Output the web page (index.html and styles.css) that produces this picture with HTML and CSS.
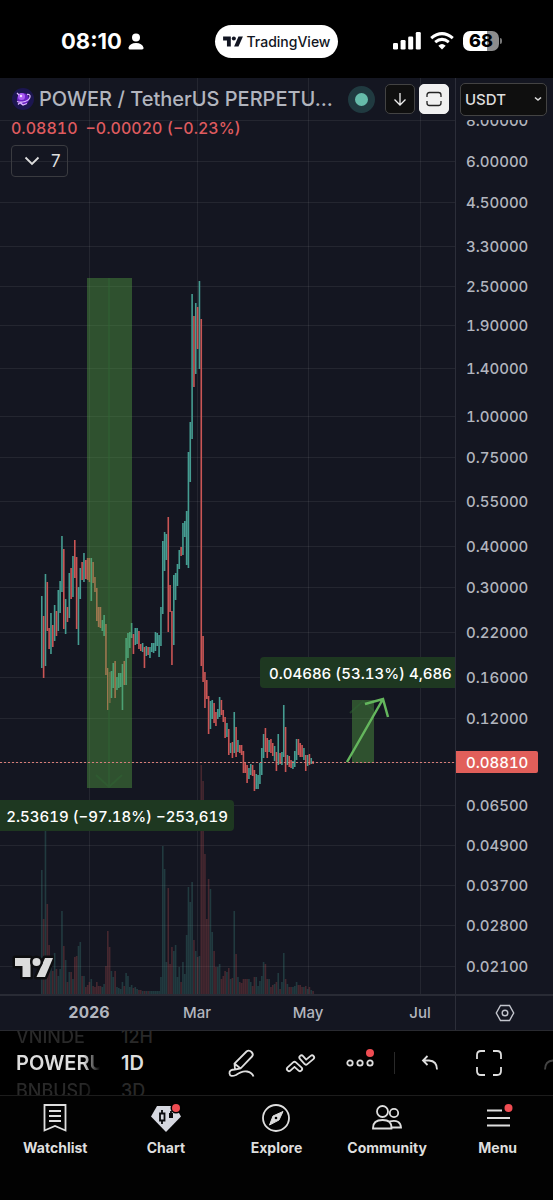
FILE: index.html
```html
<!DOCTYPE html>
<html lang="en">

<head>
    <meta charset="UTF-8">
    <meta name="viewport" content="width=device-width, initial-scale=1">
    <title>POWER / TetherUS</title>
    <link rel="stylesheet" href="styles.css">
</head>

<body>
    <header class="status">
        <div class="clock">
            <span>08:10</span>
            <svg width="16" height="17" viewBox="0 0 16 17" fill="#fff"><circle cx="8" cy="4.5" r="4"/><path d="M.5 16.500V14.500Q2 10 8 10T15.500 14.500Q16 16.500 14 16.500H2Q.5 16.500.5 15z"/></svg>
        </div>
        <div class="island">
            <svg width="20" height="11" viewBox="0 0 36 20" fill="#111522"><path d="M0 1H14V19H7V8H0z"/><circle cx="19.500" cy="4.500" r="3.700"/><path d="M28 1H36L28 19H20z"/></svg>
            <span>TradingView</span>
        </div>
        <div class="signals">
            <svg width="28" height="18" viewBox="0 0 28 18" fill="#fff"><rect y="11" width="5" height="6.500" rx="1.300"/><rect x="7.600" y="8" width="5" height="9.500" rx="1.300"/><rect x="15.200" y="4.500" width="5" height="13" rx="1.300"/><rect x="22.800" y="0" width="5" height="17.500" rx="1.300"/></svg>
            <svg width="24" height="18" viewBox="0 0 24 18" fill="none" stroke="#fff" stroke-width="3"><path d="M1.200 6.200Q12-3 22.800 6.200"/><path d="M5.200 10.200Q12 4.500 18.800 10.200"/><path d="M12 17.500L8.300 13.700Q12 10.500 15.700 13.700z" fill="#fff" stroke="none"/></svg>
            <div class="battery"><b>68</b></div>
        </div>
    </header>

    <main class="chart">
        <section class="pane">
            <svg id="plot" class="layer"></svg>
            <div class="legend">
                <div class="title-row">
                    <svg width="24" height="24" viewBox="0 0 24 24"><circle cx="12" cy="12" r="11" fill="#1c1650"/><circle cx="12" cy="12" r="6" fill="#6a22c4"/><circle cx="10.500" cy="9.500" r="3.500" fill="#a95cf2"/><path d="M6 6L8 8M16 7.500Q19.500 7 19 10T14 14.500T6 14.500M7 17.500L9 15.500L12 18L16 16.500" fill="none" stroke="#dcb8ff" stroke-width="1.300"/><circle cx="10" cy="9" r="1.200" fill="#f0dcff"/></svg>
                    <h1>POWER / TetherUS PERPETU...</h1>
                    <span class="live"></span>
                    <button class="square" aria-label="Down">
                        <svg width="16" height="16" viewBox="0 0 16 16" fill="none" stroke="#eee" stroke-width="1.300"><path d="M8 2V13.500M2.500 8.500L8 14L13.500 8.500"/></svg>
                    </button>
                    <button class="square light" aria-label="Fit">
                        <svg width="16" height="16" viewBox="0 0 16 16" fill="none" stroke="#222" stroke-width="1.300"><path d="M1 6V4Q1 1.500 3.500 1.500H12.500Q15 1.500 15 4V6M1 10V12Q1 14.500 3.500 14.500H12.500Q15 14.500 15 12V10"/></svg>
                    </button>
                </div>
                <div class="quote"><span>0.08810</span><span>−0.00020 (−0.23%)</span></div>
                <button class="studies">
                    <svg width="16" height="10" viewBox="0 0 16 10" fill="none" stroke="#ddd" stroke-width="1.800"><path d="M1.500 1.500L8 8L14.500 1.500"/></svg>
                    7
                </button>
            </div>
            <svg class="logo" width="42" height="26" viewBox="0 0 42 26"><g fill="#dcdcdc" stroke="#0d0d0f" stroke-width="5" stroke-linejoin="round" paint-order="stroke"><path d="M3 4H18.500V23H10.500V12H3z"/><path d="M33 4H41L33 23H24.500z"/><circle cx="24.500" cy="8" r="4"/></g></svg>
        </section>
        <section class="prices">
            <div class="currency">
                <select aria-label="Currency"><option>USDT</option></select>
                <svg width="8" height="6" viewBox="0 0 8 6" fill="none" stroke="#ddd" stroke-width="1.600"><path d="M1 1.500L4 4L7 1.500"/></svg>
            </div>
            <svg id="priceAxis"></svg>
        </section>
        <svg id="timeAxis"></svg>
        <button class="corner" aria-label="Scale settings">
            <svg width="20" height="18" viewBox="0 0 20 18" fill="none" stroke="#c3c5cd" stroke-width="1.400"><path d="M5.500 1.500H14.500L18.700 9L14.500 16.500H5.500L1.300 9z"/><circle cx="10" cy="9" r="2.800"/></svg>
        </button>
    </main>

    <div class="toolbar">
        <div class="picker symbol">
            <span>VNINDE</span>
            <strong>POWERU</strong>
            <span>BNBUSD</span>
        </div>
        <div class="picker">
            <span>12H</span>
            <strong>1D</strong>
            <span>3D</span>
        </div>
        <div class="tools">
            <button aria-label="Draw">
                <svg width="28" height="30" viewBox="0 0 28 30"><path d="M8 21.500L7.500 15.500L19.500 3.500Q22 1.500 24.500 4T25 8.500L13.500 20.500L8 21.500M7.500 15.500L13.500 20.500M8 21.500Q2 21.500 2.500 25.500T9 27Q15 22.500 20 23.500T26.500 28.500"/></svg>
            </button>
            <button aria-label="Indicators">
                <svg width="32" height="22" viewBox="0 0 32 22" stroke-linecap="round" stroke-linejoin="round"><path d="M5 17L10.500 12L16 17M17.500 5.500L22 10.500L28 5.500" stroke-width="6"/><path d="M5 17L10.500 12L16 17M17.500 5.500L22 10.500L28 5.500" stroke="#000" stroke-width="2.400"/></svg>
            </button>
            <button class="dotted" aria-label="More">
                <svg width="28" height="8" viewBox="0 0 28 8"><circle cx="4" cy="4" r="2.700"/><circle cx="14" cy="4" r="2.700"/><circle cx="24" cy="4" r="2.700"/></svg>
            </button>
            <i class="divider"></i>
            <button aria-label="Undo">
                <svg width="18" height="16" viewBox="0 0 18 16"><path d="M6.500 1L2 5.500L6.500 10M2 5.500H8Q16 6 16 14.500"/></svg>
            </button>
            <button class="full" aria-label="Fullscreen">
                <svg width="26" height="26" viewBox="0 0 26 26"><path d="M1 9V5Q1 1 5 1H9M17 1H21Q25 1 25 5V9M25 17V21Q25 25 21 25H17M9 25H5Q1 25 1 21V17"/></svg>
            </button>
            <button class="redo" aria-label="Redo">
                <svg width="18" height="16" viewBox="0 0 18 16"><path d="M11.500 1L16 5.500L11.500 10M16 5.500H10Q2 6 2 14.500"/></svg>
            </button>
        </div>
    </div>

    <nav class="tabs">
        <a href="#watchlist">
            <svg width="32" height="30" viewBox="0 0 32 30"><path d="M5.500 2H26.500V27.500L16 23L5.500 27.500zM10 8H22M10 13H22M10 18H22"/></svg>
            Watchlist
        </a>
        <a href="#chart">
            <svg width="32" height="30" viewBox="0 0 32 30"><path d="M7 3H25L31 13.500L16 29L1 13.500z" fill="#d6d8e0" stroke="none"/><path d="M12 7V10M12 18V21M10 10.500H14.500V17.500H10zM21 8V12" stroke="#08090c"/><path d="M19 10H23V15H19z" fill="#08090c" stroke="none"/><circle cx="26" cy="5" r="5.500" fill="#020202" stroke="none"/><circle cx="26" cy="5" r="4" fill="#ef4c52" stroke="none"/></svg>
            Chart
        </a>
        <a href="#explore">
            <svg width="32" height="30" viewBox="0 0 32 30"><circle cx="16" cy="15" r="13"/><path d="M23 8.500L19 17L9.500 22L13 13z" fill="#ddd" stroke-width="1"/><circle cx="16" cy="15" r="1.300" fill="#020202" stroke="none"/></svg>
            Explore
        </a>
        <a href="#community">
            <svg width="32" height="30" viewBox="0 0 32 30"><circle cx="11.500" cy="8.500" r="5.500"/><circle cx="23" cy="10" r="4.200"/><path d="M2 25Q2 17 11.500 17T20.500 25.500H2zM18.500 18.500Q29.500 16 30 24.500H21"/></svg>
            Community
        </a>
        <a href="#menu">
            <svg width="32" height="30" viewBox="0 0 32 30"><path d="M5 7.500H20M5 15H28M5 22.500H28"/><circle cx="26.500" cy="5" r="4" fill="#ef4c52" stroke="none"/></svg>
            Menu
        </a>
    </nav>

    <script src="chart.js"></script>
</body>

</html>
```
FILE: styles.css
```css
* {
    margin: 0;
    padding: 0;
    box-sizing: border-box;
}

body {
    display: flex;
    flex-direction: column;
    min-height: 100vh;
    background-color: #000;
    color: #dedede;
    font-family: Inter, "Liberation Sans", sans-serif;
    overflow-x: hidden;
}

button {
    background: none;
    border: 0;
    color: inherit;
    font: inherit;
}

svg {
    display: block;
    flex: none;
}

/* status bar */
.status {
    display: grid;
    grid-template-columns: 1fr auto 1fr;
    align-items: center;
    height: 78px;
    padding-top: 4px;
    color: #fff;
}

.clock {
    display: flex;
    align-items: center;
    gap: 6px;
    padding-left: 61px;
    font-size: 22px;
    font-weight: 700;
}

.island {
    display: flex;
    align-items: center;
    gap: 4px;
    height: 33px;
    padding: 0 8px;
    border-radius: 17px;
    background-color: #fff;
    color: #111522;
    font-size: 14px;
    font-weight: 500;
}

.signals {
    display: flex;
    justify-content: flex-end;
    align-items: center;
    gap: 9px;
    padding-right: 54px;
}

.battery {
    position: relative;
    width: 36px;
    height: 20px;
    border-radius: 7px;
    background: linear-gradient(90deg, #fff 68%, #8c8c8c 68%);
    color: #000;
    text-align: center;
    font-size: 18px;
    line-height: 20px;
}

.battery b {
    font-weight: 800;
}

.battery::after {
    content: "";
    position: absolute;
    right: -3px;
    top: 7px;
    width: 2px;
    height: 6px;
    border-radius: 0 2px 2px 0;
    background-color: #777;
}

/* chart */
.chart {
    flex: 1;
    display: grid;
    grid-template-columns: 1fr 98px;
    grid-template-rows: 1fr 36px;
    background-color: #141621;
    border-bottom: 1px solid #292a30;
}

.chart text {
    font-size: 15px;
    font-weight: 500;
    font-variant-numeric: tabular-nums;
    fill: #b2b5be;
}

.pane {
    position: relative;
    overflow: hidden;
}

.layer {
    position: absolute;
    width: 100%;
    height: 100%;
}

.legend {
    position: absolute;
    inset: 0 6px auto 11px;
}

.title-row {
    display: flex;
    align-items: center;
    gap: 4px;
    height: 42px;
}

.title-row h1 {
    flex: 1;
    min-width: 0;
    white-space: nowrap;
    color: #b2b5be;
    font-size: 20px;
    font-weight: 500;
}

.live {
    width: 27px;
    height: 27px;
    margin-right: 6px;
    border: 7px solid #203a40;
    border-radius: 50%;
    background-color: #66bbaa;
}

.square {
    display: grid;
    place-items: center;
    width: 30px;
    height: 30px;
    border: 1px solid #434343;
    border-radius: 5px;
    background-color: #0f0f0f;
}

.square.light {
    border-color: #f0f0f0;
    background-color: #f0f0f0;
}

.quote {
    display: flex;
    gap: 8px;
    color: #df5b5f;
    font-size: 16px;
    font-weight: 500;
    line-height: 17px;
    font-variant-numeric: tabular-nums;
}

.studies {
    display: flex;
    align-items: center;
    gap: 11px;
    height: 32px;
    margin-top: 8px;
    padding: 0 6px 0 12px;
    border: 1px solid #3a3b40;
    border-radius: 4px;
    font-size: 17px;
}

.logo {
    position: absolute;
    left: 12px;
    bottom: 14px;
}

.prices {
    display: flex;
    flex-direction: column;
    min-width: 0;
    border-left: 1px solid #2c2e39;
}

.prices > svg {
    flex: 1;
    width: 100%;
}

.currency {
    display: grid;
    align-items: center;
    height: 42px;
    padding: 0 6px 0 4px;
}

.currency > * {
    grid-area: 1 / 1;
}

.currency svg {
    justify-self: end;
    margin-right: 5px;
}

.currency select {
    appearance: none;
    width: 100%;
    height: 33px;
    padding-left: 4px;
    border: 1px solid #434343;
    border-radius: 5px;
    background-color: #0f0f0f;
    color: #dedede;
    font: 500 15px Inter, sans-serif;
}

#timeAxis,
.corner {
    width: 100%;
    height: 36px;
    border-top: 2px solid #292b35;
}

#timeAxis text {
    text-anchor: middle;
}

#timeAxis .year {
    font-size: 16px;
    font-weight: 700;
}

.corner {
    display: grid;
    place-items: center;
    border-left: 1px solid #2c2e39;
}

/* chart drawing */
.grid {
    stroke: #fff;
    stroke-opacity: .07;
}

.up,
.down {
    fill: none;
    stroke-width: 1.6;
}

.up {
    stroke: #459c91;
}

.down {
    stroke: #ca5555;
}

.volume {
    opacity: .28;
}

.range {
    fill: #58a945;
    fill-opacity: .4;
}

.range-line {
    fill: none;
    stroke: #2f6433;
    stroke-width: 2;
    stroke-opacity: .5;
}

.arrow {
    fill: none;
    stroke: #64b65d;
    stroke-width: 2.5;
}

.last {
    stroke: #d67d78;
    stroke-dasharray: 2 2;
}

.note {
    fill: #1e3821;
}

.chart .note-text,
.chart .last-text {
    fill: #fff;
}

.last-box {
    fill: #e15f5a;
}

/* bottom toolbar */
.toolbar {
    display: flex;
    height: 65px;
    overflow: hidden;
    border-bottom: 1px solid #1c1c1c;
}

.picker {
    display: flex;
    flex-direction: column;
    justify-content: center;
    width: 102px;
    padding-left: 19px;
    line-height: 27px;
    white-space: nowrap;
}

.picker.symbol {
    padding-left: 16px;
    -webkit-mask-image: linear-gradient(90deg, #000 82%, transparent 98%);
    mask-image: linear-gradient(90deg, #000 82%, transparent 98%);
}

.picker span {
    color: #292929;
    font-size: 18px;
    font-weight: 500;
}

.picker strong {
    font-size: 20px;
    font-weight: 600;
}

.tools {
    flex: 1;
    display: flex;
    align-items: center;
    min-width: 0;
    padding-left: 7px;
}

.tools button {
    flex: 1;
    display: grid;
    place-items: center;
    position: relative;
}

.tools svg,
.tabs svg {
    fill: none;
    stroke: #dedede;
    stroke-width: 1.8;
}

.tools .dotted::after {
    content: "";
    position: absolute;
    left: calc(50% + 6px);
    top: -10px;
    width: 8px;
    height: 8px;
    border-radius: 50%;
    background-color: #ef4c52;
}

.divider {
    width: 1px;
    height: 22px;
    margin: 0 5px;
    background-color: #292929;
}

/* next tool, half scrolled out */
.tools .redo {
    flex: 0 0 42px;
    justify-items: end;
    margin-right: -8px;
    opacity: .3;
}

/* tabs */
.tabs {
    display: grid;
    grid-template-columns: repeat(5, 1fr);
    height: 104px;
    padding-top: 7px;
    background-color: #020202;
}

.tabs a {
    display: flex;
    flex-direction: column;
    align-items: center;
    gap: 6px;
    color: inherit;
    font-size: 14px;
    font-weight: 700;
    line-height: 17px;
    text-decoration: none;
}
```
FILE: chart.js
```js
// high and low of each daily bar, g = up, r = down
var bars = "596 668g,616 678r,574 666g,582 631r,628 649r,613 654g,625 647r,605 641g,611 636r,590 631g," +
    "581 613g,536 592g,549 629r,599 634g,607 622r,573 618g,568 599r,556 597g,540 578r,557 629r," +
    "587 645g,568 599g,562 580r,553 582g,560 579r,558 580r,558 582r,558 601g,562 583r,577 592r," +
    "588 621r,607 627r,607 628r,620 631g,615 636g,624 675r,668 710r,672 703r,671 698g,663 688g," +
    "661 698r,677 690g,673 688g,673 687g,664 710g,661 685r,638 685g,633 658g,632 648g,623 638g," +
    "634 654r,628 645g,628 644g,631 649r,644 651r,643 652g,647 668r,646 656g,647 655r,647 658g," +
    "643 652g,643 653g,632 651g,633 646g,635 657g,607 646g,541 614g,532 571g,534 560g,517 632r," +
    "585 612r,611 665r,575 645g,573 600g,564 586g,550 569g,547 556r,523 555g,521 537g,511 565g," +
    "452 568g,422 482g,294 439g,316 387r,303 374g,307 349r,281 369g,319 666r,636 682r,672 708r," +
    "680 699r,696 734r,701 729g,700 719g,703 723r,712 726r,709 719g,697 717g,700 715r,710 722r," +
    "717 738r,723 737g,729 755r,743 753g,742 758r,712 753g,727 757r,740 752g,745 753r,745 755r," +
    "751 773r,763 773r,765 783r,768 779g,764 775g,765 776r,770 791r,774 789g,775 789g,763 784g," +
    "748 775g,734 758g,728 752r,738 758r,740 752g,739 753r,743 756r,746 761g,752 771r,734 765g," +
    "753 764r,752 765g,705 757g,727 772r,755 765g,756 767r,760 768r,761 769g,751 767g,739 760g," +
    "739 755r,743 757r,745 757r,748 760g,755 771r,755 766g,754 765r,758 764g,761 764r";

// volume heights
var volumes = [124, 75, 163, 90, 49, 28, 23, 41, 25, 18, 25, 83, 48, 34, 12, 22, 22, 15, 37, 38,
    48, 52, 18, 18, 7, 9, 12, 15, 8, 7, 12, 8, 8, 7, 10, 28, 63, 47, 23, 17,
    23, 7, 6, 5, 12, 8, 21, 18, 7, 9, 6, 7, 5, 4, 4, 3, 3, 3, 3, 3,
    3, 3, 3, 3, 3, 17, 148, 125, 32, 106, 30, 47, 43, 49, 17, 27, 12, 32, 20, 59,
    107, 92, 112, 54, 43, 37, 38, 229, 213, 140, 75, 115, 105, 62, 43, 27, 27, 30, 15, 18,
    23, 22, 26, 15, 16, 83, 40, 17, 12, 11, 15, 15, 15, 15, 12, 8, 17, 17, 8, 13,
    18, 32, 30, 15, 15, 7, 9, 10, 12, 21, 5, 12, 41, 15, 10, 7, 7, 7, 8, 12,
    9, 9, 7, 7, 8, 5, 7, 4, 3];

var prices = [8, 6, 4.5, 3.3, 2.5, 1.9, 1.4, 1, 0.75, 0.55, 0.4, 0.3, 0.22, 0.16, 0.12,
    0.065, 0.049, 0.037, 0.028, 0.021];
var dates = [["2026", 89], ["Mar", 197], ["May", 308], ["Jul", 420]];
var last = 0.0881;
var STATUS = 78;
var HEADER = 42;

// logarithmic scale
function priceY(p) {
    return Math.round(338 - Math.log(p) * 142.4);
}

function tag(name, attrs, text) {
    var s = "<" + name;
    for (var key in attrs) {
        s += " " + key + '="' + attrs[key] + '"';
    }
    return s + ">" + (text || "") + "</" + name + ">";
}

function drawPlot() {
    var plot = document.getElementById("plot");
    var w = plot.clientWidth;
    var h = plot.clientHeight;
    var lines = "";
    var paths = { g: "", r: "" };
    var vols = { g: "", r: "" };

    prices.concat(last).forEach(function(p) {
        lines += "M0 " + (priceY(p) + 0.5) + "H" + w;
    });
    dates.forEach(function(d) {
        lines += "M" + (d[1] + 0.5) + " 0V" + h;
    });

    bars.split(",").forEach(function(bar, i) {
        var color = bar.slice(-1);
        var hl = bar.slice(0, -1).split(" ");
        var x = (41.8 + i * 1.833).toFixed(2);
        paths[color] += "M" + x + " " + (hl[0] - STATUS) + "V" + (hl[1] - STATUS);
        vols[color] += "M" + x + " " + h + "v-" + volumes[i];
    });

    var y = priceY(last) + 0.5;
    plot.innerHTML =
        tag("path", { class: "grid", d: lines }) +
        tag("path", { class: "up volume", d: vols.g }) +
        tag("path", { class: "down volume", d: vols.r }) +
        tag("path", { class: "up", d: paths.g }) +
        tag("path", { class: "down", d: paths.r }) +
        // price ranges
        tag("rect", { class: "range", x: 87, y: 200, width: 45, height: 510 }) +
        tag("path", { class: "range-line", d: "M109 200V709M96 697L109 709L122 697" }) +
        tag("rect", { class: "range", x: 352, y: 622, width: 22, height: 63 }) +
        tag("path", { class: "range-line", d: "M350 635L363 623L374 633" }) +
        tag("path", { class: "last", d: "M0 " + y + "H" + w }) +
        tag("path", { class: "arrow", d: "M347 684L383 621M365 626L383 621L388 639" }) +
        tag("rect", { class: "note", x: 260, y: 579, width: 240, height: 31, rx: 4 }) +
        tag("text", { class: "note-text", x: 269, y: 601 }, "0.04686 (53.13%) 4,686") +
        tag("rect", { class: "note", x: -20, y: 722, width: 254, height: 31, rx: 4 }) +
        tag("text", { class: "note-text", x: 228, y: 744, "text-anchor": "end" }, "2.53619 (−97.18%) −253,619");
}

function drawAxes() {
    var y = priceY(last) - HEADER;
    var labels = "";
    prices.forEach(function(p) {
        labels += tag("text", { x: 10, y: priceY(p) - HEADER + 6 }, p.toFixed(5));
    });
    labels += tag("rect", { class: "last-box", x: -4, y: y - 11, width: 86, height: 22, rx: 2 }) +
        tag("text", { class: "last-text", x: 10, y: y + 6 }, last.toFixed(5));
    document.getElementById("priceAxis").innerHTML = labels;

    document.getElementById("timeAxis").innerHTML = dates.map(function(d, i) {
        return tag("text", { class: i ? "month" : "year", x: d[1], y: 22 }, d[0]);
    }).join("");
}

drawPlot();
drawAxes();
window.onresize = drawPlot;
```
